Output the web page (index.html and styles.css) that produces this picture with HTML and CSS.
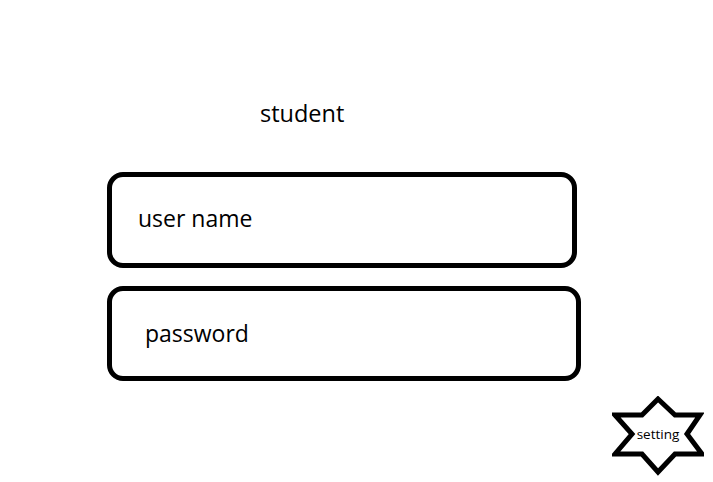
FILE: index.html
```html
<!DOCTYPE html>
<html lang="en">
<head>
  <meta charset="UTF-8" />
  <title>student</title>
  <link rel="stylesheet" href="styles.css">
</head>
<body>
  <main class="login">
    <h1 class="title">student</h1>
    <div class="field field-user"><span>user name</span></div>
    <div class="field field-pass"><span>password</span></div>
    <div class="footer">
      <div class="setting">
        <svg class="star" width="92" height="80" viewBox="612 396 92 80">
          <polygon points="658,399 675,415 700,415 687,434 702,454 675,454 658,472 642,454 615,454 632,434 615,415 642,415"
                   fill="#fff" stroke="#000" stroke-width="5" stroke-linejoin="miter"/>
        </svg>
        <span class="setting-label">setting</span>
      </div>
    </div>
  </main>
</body>
</html>
```

FILE: styles.css
```css
* {
  box-sizing: border-box;
}

body {
  margin: 0;
  background: #fff;
  font-family: "Open Sans", "Noto Sans", sans-serif;
  color: #000;
}

.login {
  padding-top: 98px;
  padding-left: 107px;
  width: 713px;
  height: 482px;
}

.title {
  margin: 0 0 44px 153px;
  font-size: 23.5px;
  font-weight: normal;
  line-height: 30px;
}

.field {
  display: flex;
  align-items: center;
  border: 5px solid #000;
  border-radius: 16px;
  font-size: 23px;
}

.field-user {
  width: 470px;
  height: 96px;
  padding-left: 26px;
  padding-bottom: 5px;
}

.field-pass {
  width: 474px;
  height: 95px;
  margin-top: 18px;
  padding-left: 33px;
  padding-bottom: 1px;
}

.footer {
  display: flex;
  justify-content: flex-end;
  width: 597px;
  margin-top: 15px;
}

.setting {
  position: relative;
  width: 92px;
  height: 80px;
}

.star {
  display: block;
}

.setting-label {
  position: absolute;
  left: 0;
  right: 0;
  top: 29px;
  text-align: center;
  font-size: 13.5px;
  line-height: 18px;
}
```
